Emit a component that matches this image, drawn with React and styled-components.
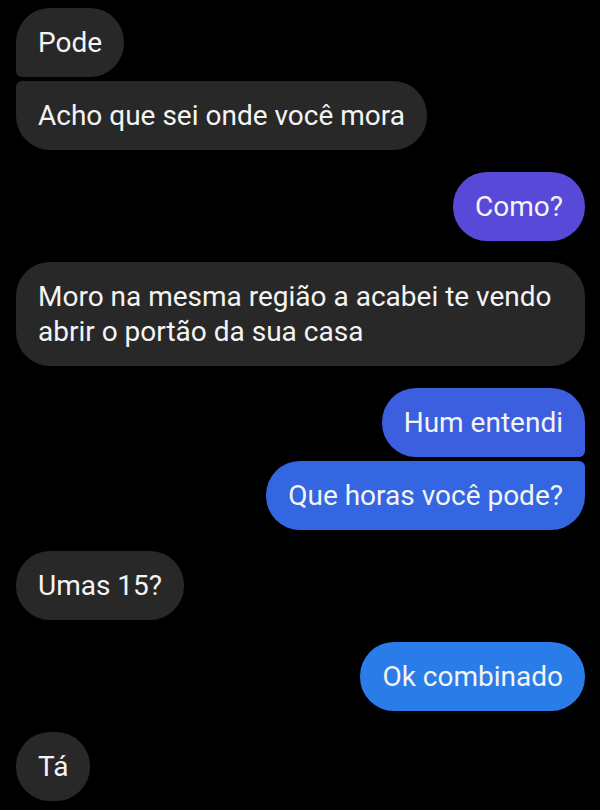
import React from "react";
import styled, { createGlobalStyle, css } from "styled-components";

const GlobalStyle = createGlobalStyle`
  html, body {
    margin: 0;
    padding: 0;
    background: #000;
  }
  body {
    font-family: Roboto, "Noto Sans", sans-serif;
  }
`;

const messages = [
  { from: "them", text: "Pode" },
  { from: "them", text: "Acho que sei onde você mora" },
  { from: "me", text: "Como?", color: "#5849d9" },
  { from: "them", text: "Moro na mesma região a acabei te vendo abrir o portão da sua casa" },
  { from: "me", text: "Hum entendi", color: "#3c5fe0" },
  { from: "me", text: "Que horas você pode?", color: "#3566e2" },
  { from: "them", text: "Umas 15?" },
  { from: "me", text: "Ok combinado", color: "#2a7ce8" },
  { from: "them", text: "Tá" },
];

// group consecutive messages from the same side
const groups = messages.reduce((acc, msg) => {
  const last = acc[acc.length - 1];
  if (last && last.from === msg.from) last.items.push(msg);
  else acc.push({ from: msg.from, items: [msg] });
  return acc;
}, []);

const BIG = 34;
const SMALL = 6;

const Page = styled.div`
  width: 600px;
  height: 810px;
  overflow: hidden;
  background: #000;
  box-sizing: border-box;
  padding: 8px 15px 0 16px;
  display: flex;
  flex-direction: column;
  gap: 21.5px;
`;

const Group = styled.div`
  display: flex;
  flex-direction: column;
  gap: 4px;
  align-items: ${(p) => (p.$mine ? "flex-end" : "flex-start")};
`;

const Bubble = styled.div`
  box-sizing: border-box;
  max-width: 569px;
  padding: 17px 22px;
  font-size: 28px;
  line-height: 35px;
  color: #f4f4f4;
  background: ${(p) => p.$color || "#282828"};
  border-radius: ${BIG}px;
  ${(p) =>
    p.$mine
      ? css`
          ${!p.$first && `border-top-right-radius: ${SMALL}px;`}
          ${!p.$last && `border-bottom-right-radius: ${SMALL}px;`}
        `
      : css`
          ${!p.$first && `border-top-left-radius: ${SMALL}px;`}
          ${!p.$last && `border-bottom-left-radius: ${SMALL}px;`}
        `}
`;

export default function App() {
  return (
    <>
      <GlobalStyle />
      <Page>
        {groups.map((g, gi) => (
          <Group key={gi} $mine={g.from === "me"}>
            {g.items.map((m, i) => (
              <Bubble
                key={i}
                $mine={g.from === "me"}
                $color={m.color}
                $first={i === 0}
                $last={i === g.items.length - 1}
              >
                {m.text}
              </Bubble>
            ))}
          </Group>
        ))}
      </Page>
    </>
  );
}
